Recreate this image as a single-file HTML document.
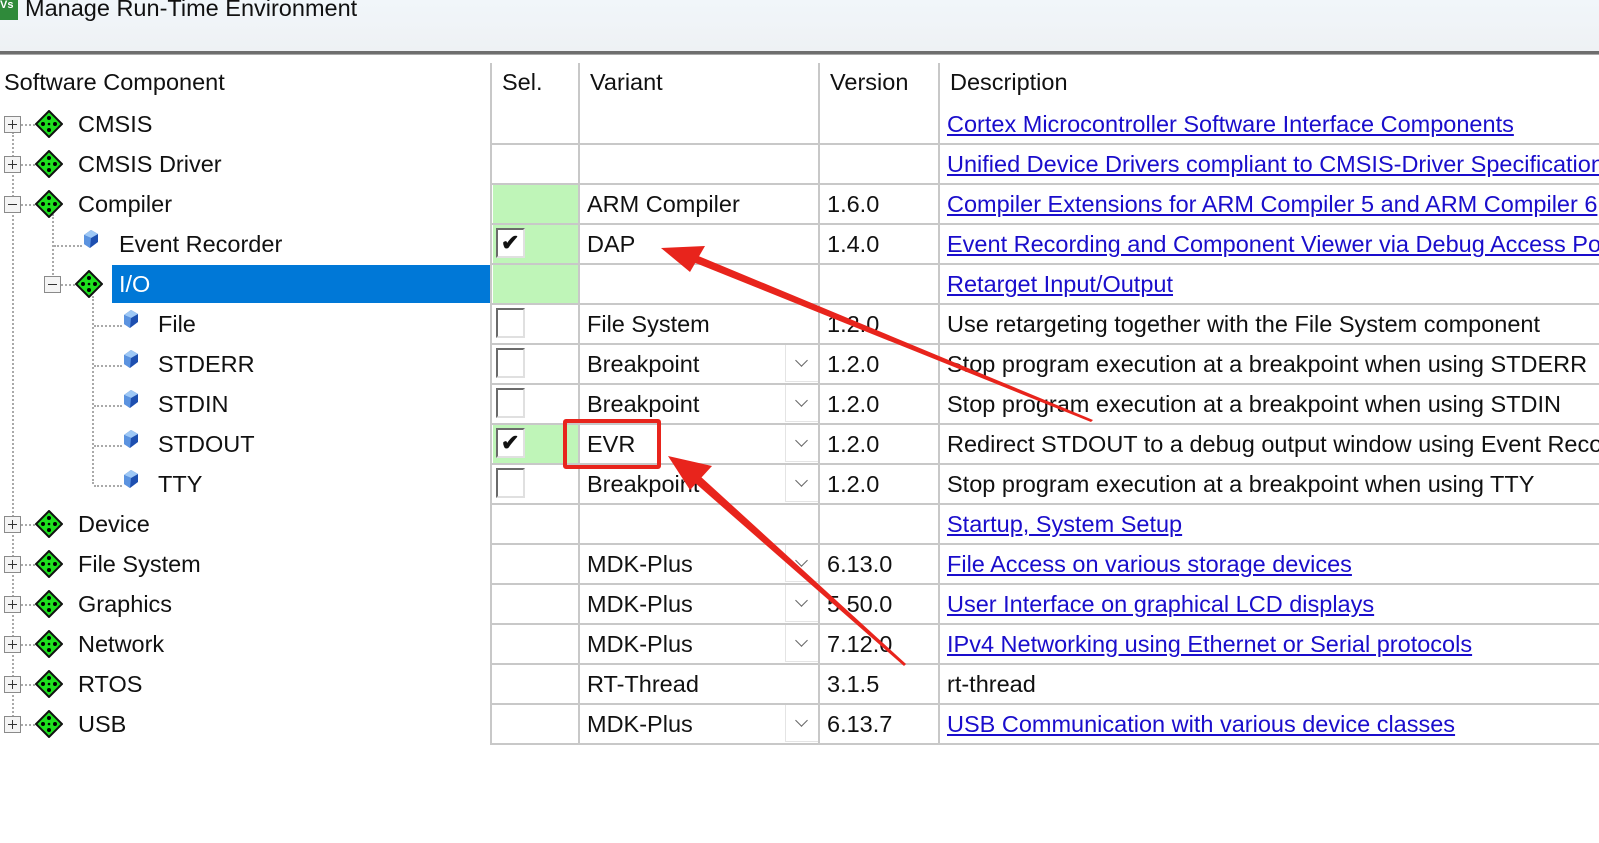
<!DOCTYPE html>
<html><head><meta charset="utf-8"><style>
*{margin:0;padding:0;box-sizing:border-box}
body{width:1599px;height:843px;background:#fff;position:relative;overflow:hidden;font-family:"Liberation Sans",sans-serif;font-size:23.5px;color:#111}
.a{position:absolute;white-space:nowrap}
.t{line-height:40px;height:40px}
.hl{position:absolute;left:491px;width:1108px;height:2px;background:#c8c8c8}
.vl{position:absolute;top:63px;height:682px;width:2px;background:#c8c8c8}
a{color:#1a0dcc;text-decoration:underline}
.cb{position:absolute;left:496px;width:29px;height:30px;background:#fff;border:2px solid #6a6a6a;border-right-color:#e0e0e0;border-bottom-color:#e0e0e0}
.ck{position:absolute;left:501px;font-size:22px;font-weight:bold;line-height:30px}
.dd{position:absolute;left:785px;width:33px;height:37px;background:#fff;border-left:1px solid #e4e4e4;border-bottom:1px solid #e4e4e4}
.dd:after{content:"";position:absolute;left:11px;top:11px;width:8px;height:8px;border-right:1.5px solid #666;border-bottom:1.5px solid #666;transform:rotate(45deg)}
.g{position:absolute;left:493px;width:85px;height:38px;background:#bff5b8}
.ex{position:absolute;width:17px;height:17px;border:1px solid #8a8a8a;background:#f4f4f4}
.ex:before{content:"";position:absolute;left:3px;top:7px;width:9px;height:1px;background:#333}
.ex.p:after{content:"";position:absolute;left:7px;top:3px;width:1px;height:9px;background:#333}
.dv{position:absolute;border-left:2px dotted #aaa}
.dh{position:absolute;border-top:2px dotted #aaa}
</style></head><body>
<div class="a" style="left:0;top:0;width:1599px;height:51px;background:linear-gradient(#f1f6fa,#eef1f4)"></div>
<div class="a" style="left:0;top:51px;width:1599px;height:4px;background:#6e6e6e;border-bottom:1px solid #aaa"></div>
<div class="a" style="left:0;top:0;width:18px;height:20px;background:#2f8a3a;color:#fff;font-size:11px;font-weight:bold;line-height:10px">Vs</div>
<div class="a" style="left:25px;top:-6px;font-size:23.5px;line-height:28px;color:#111">Manage Run-Time Environment</div>

<div class="a" style="left:4px;top:62px;line-height:40px">Software Component</div>
<div class="a" style="left:502px;top:62px;line-height:40px">Sel.</div>
<div class="a" style="left:590px;top:62px;line-height:40px">Variant</div>
<div class="a" style="left:830px;top:62px;line-height:40px">Version</div>
<div class="a" style="left:950px;top:62px;line-height:40px">Description</div>

<div class="g" style="top:185px"></div>
<div class="g" style="top:225px"></div>
<div class="g" style="top:265px"></div>
<div class="g" style="top:425px"></div>
<div class="a" style="left:112px;top:265px;width:378px;height:38px;background:#0078d7"></div>

<div class="vl" style="left:490px"></div>
<div class="vl" style="left:578px"></div>
<div class="vl" style="left:818px"></div>
<div class="vl" style="left:938px"></div>
<div class="hl" style="top:143px"></div><div class="hl" style="top:183px"></div><div class="hl" style="top:223px"></div><div class="hl" style="top:263px"></div><div class="hl" style="top:303px"></div><div class="hl" style="top:343px"></div><div class="hl" style="top:383px"></div><div class="hl" style="top:423px"></div><div class="hl" style="top:463px"></div><div class="hl" style="top:503px"></div><div class="hl" style="top:543px"></div><div class="hl" style="top:583px"></div><div class="hl" style="top:623px"></div><div class="hl" style="top:663px"></div><div class="hl" style="top:703px"></div><div class="hl" style="top:743px"></div>

<div class="dv" style="left:12px;top:132px;height:592px"></div>
<div class="dv" style="left:52px;top:214px;height:72px"></div>
<div class="dv" style="left:92px;top:296px;height:188px"></div>

<svg width="0" height="0" style="position:absolute"><defs>
<g id="dm"><path d="M14 1 L27 14 L14 27 L1 14Z" fill="#1ee01e" stroke="#111" stroke-width="2"/><circle cx="14" cy="8" r="2" fill="#000"/><circle cx="14" cy="20" r="2" fill="#000"/><circle cx="8" cy="14" r="2" fill="#000"/><circle cx="20" cy="14" r="2" fill="#000"/><circle cx="14" cy="14" r="1.3" fill="#000"/></g>
<g id="cu"><path d="M9 1 L16 5 L16 13 L8 19 L2 15 L2 6Z" fill="#1d4fb0"/><path d="M9 1 L16 5 L9 9 L2 6Z" fill="#9ec8f5"/><path d="M2 6 L9 9 L8 19 L2 15Z" fill="#5b93e0"/></g>
</defs></svg>

<div class="ex p" style="left:4px;top:116px"></div><div class="dh" style="left:21px;top:124px;width:14px"></div><svg class="a" style="left:35px;top:110px" width="28" height="28"><use href="#dm"/></svg><div class="a t" style="left:78px;top:104px">CMSIS</div>
<div class="ex p" style="left:4px;top:156px"></div><div class="dh" style="left:21px;top:164px;width:14px"></div><svg class="a" style="left:35px;top:150px" width="28" height="28"><use href="#dm"/></svg><div class="a t" style="left:78px;top:144px">CMSIS Driver</div>
<div class="ex" style="left:4px;top:196px"></div><div class="dh" style="left:21px;top:204px;width:14px"></div><svg class="a" style="left:35px;top:190px" width="28" height="28"><use href="#dm"/></svg><div class="a t" style="left:78px;top:184px">Compiler</div>
<div class="dh" style="left:54px;top:245px;width:28px"></div><svg class="a" style="left:82px;top:229px" width="18" height="20"><use href="#cu"/></svg><div class="a t" style="left:119px;top:224px">Event Recorder</div>
<div class="ex" style="left:44px;top:276px"></div><div class="dh" style="left:61px;top:284px;width:14px"></div><svg class="a" style="left:75px;top:270px" width="28" height="28"><use href="#dm"/></svg><div class="a t" style="left:119px;top:264px;color:#fff">I/O</div>
<div class="dh" style="left:94px;top:325px;width:28px"></div><svg class="a" style="left:122px;top:309px" width="18" height="20"><use href="#cu"/></svg><div class="a t" style="left:158px;top:304px">File</div>
<div class="dh" style="left:94px;top:365px;width:28px"></div><svg class="a" style="left:122px;top:349px" width="18" height="20"><use href="#cu"/></svg><div class="a t" style="left:158px;top:344px">STDERR</div>
<div class="dh" style="left:94px;top:405px;width:28px"></div><svg class="a" style="left:122px;top:389px" width="18" height="20"><use href="#cu"/></svg><div class="a t" style="left:158px;top:384px">STDIN</div>
<div class="dh" style="left:94px;top:445px;width:28px"></div><svg class="a" style="left:122px;top:429px" width="18" height="20"><use href="#cu"/></svg><div class="a t" style="left:158px;top:424px">STDOUT</div>
<div class="dh" style="left:94px;top:485px;width:28px"></div><svg class="a" style="left:122px;top:469px" width="18" height="20"><use href="#cu"/></svg><div class="a t" style="left:158px;top:464px">TTY</div>
<div class="ex p" style="left:4px;top:516px"></div><div class="dh" style="left:21px;top:524px;width:14px"></div><svg class="a" style="left:35px;top:510px" width="28" height="28"><use href="#dm"/></svg><div class="a t" style="left:78px;top:504px">Device</div>
<div class="ex p" style="left:4px;top:556px"></div><div class="dh" style="left:21px;top:564px;width:14px"></div><svg class="a" style="left:35px;top:550px" width="28" height="28"><use href="#dm"/></svg><div class="a t" style="left:78px;top:544px">File System</div>
<div class="ex p" style="left:4px;top:596px"></div><div class="dh" style="left:21px;top:604px;width:14px"></div><svg class="a" style="left:35px;top:590px" width="28" height="28"><use href="#dm"/></svg><div class="a t" style="left:78px;top:584px">Graphics</div>
<div class="ex p" style="left:4px;top:636px"></div><div class="dh" style="left:21px;top:644px;width:14px"></div><svg class="a" style="left:35px;top:630px" width="28" height="28"><use href="#dm"/></svg><div class="a t" style="left:78px;top:624px">Network</div>
<div class="ex p" style="left:4px;top:676px"></div><div class="dh" style="left:21px;top:684px;width:14px"></div><svg class="a" style="left:35px;top:670px" width="28" height="28"><use href="#dm"/></svg><div class="a t" style="left:78px;top:664px">RTOS</div>
<div class="ex p" style="left:4px;top:716px"></div><div class="dh" style="left:21px;top:724px;width:14px"></div><svg class="a" style="left:35px;top:710px" width="28" height="28"><use href="#dm"/></svg><div class="a t" style="left:78px;top:704px">USB</div>

<div class="cb" style="top:228px"></div><div class="ck" style="top:228px">✔</div>
<div class="cb" style="top:308px"></div>
<div class="cb" style="top:348px"></div>
<div class="cb" style="top:388px"></div>
<div class="cb" style="top:428px"></div><div class="ck" style="top:428px">✔</div>
<div class="cb" style="top:468px"></div>

<div class="dd" style="top:345px"></div><div class="dd" style="top:385px"></div><div class="dd" style="top:425px"></div><div class="dd" style="top:465px"></div>
<div class="dd" style="top:545px"></div><div class="dd" style="top:585px"></div><div class="dd" style="top:625px"></div><div class="dd" style="top:705px"></div>

<div class="a t" style="left:587px;top:184px">ARM Compiler</div>
<div class="a t" style="left:587px;top:224px">DAP</div>
<div class="a t" style="left:587px;top:304px">File System</div>
<div class="a t" style="left:587px;top:344px">Breakpoint</div>
<div class="a t" style="left:587px;top:384px">Breakpoint</div>
<div class="a t" style="left:587px;top:424px">EVR</div>
<div class="a t" style="left:587px;top:464px">Breakpoint</div>
<div class="a t" style="left:587px;top:544px">MDK-Plus</div>
<div class="a t" style="left:587px;top:584px">MDK-Plus</div>
<div class="a t" style="left:587px;top:624px">MDK-Plus</div>
<div class="a t" style="left:587px;top:664px">RT-Thread</div>
<div class="a t" style="left:587px;top:704px">MDK-Plus</div>

<div class="a t" style="left:827px;top:184px">1.6.0</div>
<div class="a t" style="left:827px;top:224px">1.4.0</div>
<div class="a t" style="left:827px;top:304px">1.2.0</div>
<div class="a t" style="left:827px;top:344px">1.2.0</div>
<div class="a t" style="left:827px;top:384px">1.2.0</div>
<div class="a t" style="left:827px;top:424px">1.2.0</div>
<div class="a t" style="left:827px;top:464px">1.2.0</div>
<div class="a t" style="left:827px;top:544px">6.13.0</div>
<div class="a t" style="left:827px;top:584px">5.50.0</div>
<div class="a t" style="left:827px;top:624px">7.12.0</div>
<div class="a t" style="left:827px;top:664px">3.1.5</div>
<div class="a t" style="left:827px;top:704px">6.13.7</div>

<div class="a t" style="left:947px;top:104px"><a>Cortex Microcontroller Software Interface Components</a></div>
<div class="a t" style="left:947px;top:144px"><a>Unified Device Drivers compliant to CMSIS-Driver Specifications</a></div>
<div class="a t" style="left:947px;top:184px"><a>Compiler Extensions for ARM Compiler 5 and ARM Compiler 6</a></div>
<div class="a t" style="left:947px;top:224px"><a>Event Recording and Component Viewer via Debug Access Port</a></div>
<div class="a t" style="left:947px;top:264px"><a>Retarget Input/Output</a></div>
<div class="a t" style="left:947px;top:304px">Use retargeting together with the File System component</div>
<div class="a t" style="left:947px;top:344px">Stop program execution at a breakpoint when using STDERR</div>
<div class="a t" style="left:947px;top:384px">Stop program execution at a breakpoint when using STDIN</div>
<div class="a t" style="left:947px;top:424px">Redirect STDOUT to a debug output window using Event Recorder</div>
<div class="a t" style="left:947px;top:464px">Stop program execution at a breakpoint when using TTY</div>
<div class="a t" style="left:947px;top:504px"><a>Startup, System Setup</a></div>
<div class="a t" style="left:947px;top:544px"><a>File Access on various storage devices</a></div>
<div class="a t" style="left:947px;top:584px"><a>User Interface on graphical LCD displays</a></div>
<div class="a t" style="left:947px;top:624px"><a>IPv4 Networking using Ethernet or Serial protocols</a></div>
<div class="a t" style="left:947px;top:664px">rt-thread</div>
<div class="a t" style="left:947px;top:704px"><a>USB Communication with various device classes</a></div>

<div class="a" style="left:563px;top:419px;width:98px;height:50px;border:4px solid #e8241c;border-radius:3px"></div>
<svg class="a" style="left:0;top:0" width="1599" height="843">
<polygon points="1093,420 1091,422 693,262 696,255" fill="#e8241c"/>
<polygon points="661,248 705,246 690,272" fill="#e8241c"/>
<polygon points="906,664 904,666 694,482 700,476" fill="#e8241c"/>
<polygon points="668,456 712,466 690,490" fill="#e8241c"/>
</svg>
</body></html>
